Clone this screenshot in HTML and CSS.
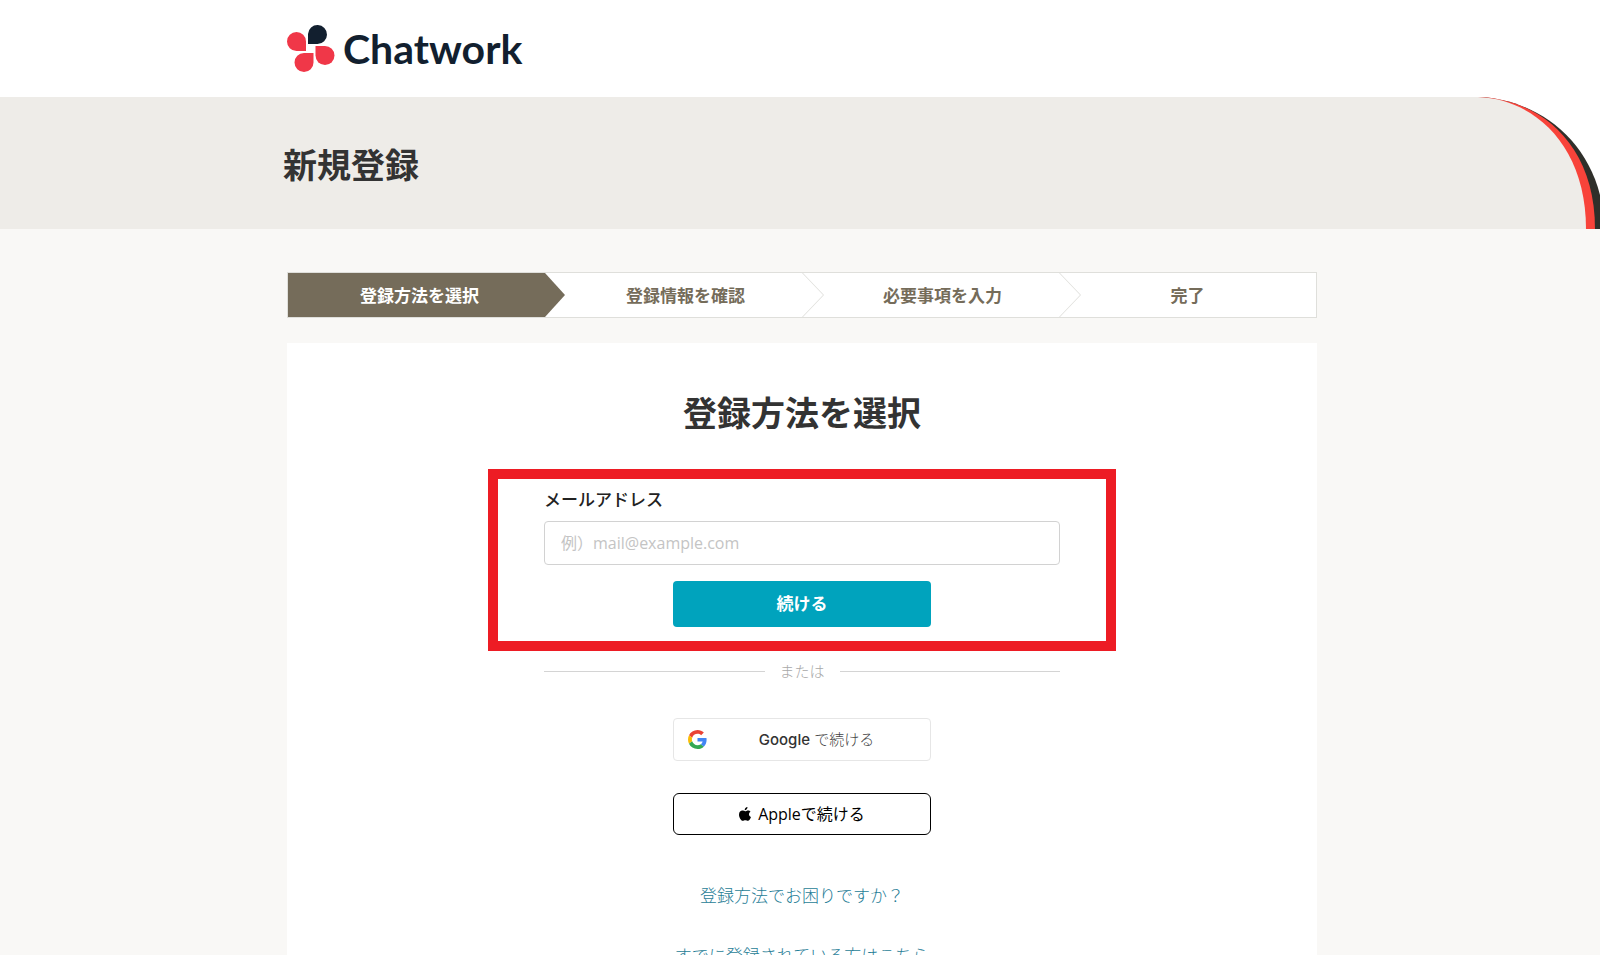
FILE: index.html
```
<!DOCTYPE html>
<html lang="ja">
<head>
    <meta charset="UTF-8">
    <meta name="viewport" content="width=device-width, initial-scale=1.0">
    <title>新規登録 | Chatwork</title>
    <link rel="stylesheet" href="styles.css">
</head>
<body>
    <header class="header">
        <div class="container">
            <a class="logo" href="#">
                <svg class="logo-mark" viewBox="0 0 48 48" aria-hidden="true">
                    <path fill="#f03748" d="M19 27H9.500A9.500 9.500 0 1 1 19 17.500Z"/>
                    <path fill="#121f2f" d="M21 20V10A9.500 9.500 0 1 1 30.500 20Z"/>
                    <path fill="#f03748" d="M28.500 22H38A9.500 9.500 0 1 1 28.500 31.500Z"/>
                    <path fill="#f03748" d="M26.500 29V38.500A9.500 9.500 0 1 1 17 29Z"/>
                </svg>
                <span class="logo-text">Chatwork</span>
            </a>
        </div>
    </header>
    <div class="hero">
        <div class="container">
            <h1>新規登録</h1>
        </div>
        <svg class="hero-curve" viewBox="0 0 128 132" preserveAspectRatio="none" aria-hidden="true">
            <rect width="128" height="132" fill="#fff"/>
            <path fill="#2f2f2a" d="M0 0H6C60 2 112 36 128 98V132H0Z"/>
            <path fill="#f8433a" d="M0 0H6C62 1 123 42 123 132H0Z"/>
            <path fill="#eeece8" d="M0 0H6C62 2 114 48 114 132H0Z"/>
        </svg>
    </div>
    <main class="container">
        <ol class="steps">
            <li class="step active">登録方法を選択</li>
            <li class="step">登録情報を確認</li>
            <li class="step">必要事項を入力</li>
            <li class="step">完了</li>
        </ol>
        <section class="card">
            <h2>登録方法を選択</h2>
            <form class="mail-form">
                <label for="email">メールアドレス</label>
                <input type="email" id="email" placeholder="例）mail@example.com">
                <button type="submit" class="button submit-button">続ける</button>
            </form>
            <div class="divider">または</div>
            <button type="button" class="button google-button">
                <svg class="google-icon" viewBox="0 0 48 48" aria-hidden="true">
                    <path fill="#ea4335" d="M24 9.500c3.540 0 6.710 1.220 9.210 3.600l6.850-6.850C35.900 2.380 30.470 0 24 0 14.620 0 6.510 5.380 2.560 13.220l7.980 6.190C12.430 13.720 17.740 9.500 24 9.500z"/>
                    <path fill="#4285f4" d="M46.980 24.550c0-1.570-.15-3.090-.38-4.550H24v9.020h12.940c-.58 2.960-2.260 5.480-4.780 7.180l7.730 6c4.510-4.180 7.090-10.360 7.090-17.650z"/>
                    <path fill="#fbbc05" d="M10.530 28.590c-.48-1.450-.76-2.990-.76-4.590s.27-3.140.76-4.590l-7.980-6.190C.92 16.460 0 20.120 0 24s.92 7.540 2.560 10.780l7.970-6.190z"/>
                    <path fill="#34a853" d="M24 48c6.480 0 11.930-2.130 15.890-5.810l-7.730-6c-2.150 1.450-4.920 2.300-8.160 2.300-6.260 0-11.570-4.220-13.470-9.910l-7.980 6.190C6.510 42.620 14.620 48 24 48z"/>
                </svg>
                <span class="google-label"><b>Google</b> で続ける</span>
            </button>
            <button type="button" class="button apple-button">
                <svg class="apple-icon" viewBox="0 0 24 28" aria-hidden="true">
                    <path d="M17 0c.2 3.500-2.700 6.600-5.600 6.500C11 3.400 13.900.3 17 0zM23 9.500c-4.400 2.700-3.700 8.600.9 10.500-.9 2.700-3.300 7.600-6.200 7.600-2 0-2.700-1.200-5.100-1.200s-3.200 1.200-5.100 1.200C4 27.600 0 21 0 15.500 0 10 3.400 7.200 6.800 7.200c2.300 0 4 1.400 5.500 1.400 1.400 0 3.400-1.500 6.200-1.500 1.800 0 3.500.9 4.500 2.400z"/>
                </svg>
                <span>Appleで続ける</span>
            </button>
            <a class="link" href="#">登録方法でお困りですか？</a>
            <a class="link" href="#">すでに登録されている方はこちら</a>
        </section>
    </main>
</body>
</html>
```
FILE: styles.css
```
* {
    box-sizing: border-box;
}

body {
    margin: 0;
    font-family: "Open Sans", "Noto Sans CJK JP", sans-serif;
    font-size: 17px;
    line-height: 24px;
    color: #333;
    background-color: #f9f8f6;
    overflow-x: hidden;
}

.container {
    width: 100%;
    max-width: 1034px;
    margin: 0 auto;
    padding-left: 4px;
}

.header {
    background-color: #fff;
    padding: 24px 0 25px;
}

.logo {
    display: inline-flex;
    align-items: center;
    gap: 8px;
    height: 48px;
    color: #121f2f;
    text-decoration: none;
    vertical-align: top;
}

.logo-mark {
    width: 48px;
    height: 48px;
}

.logo-text {
    padding-top: 2px;
    font-family: Lato, sans-serif;
    font-size: 41px;
    font-weight: 700;
    line-height: 48px;
}

.hero {
    position: relative;
    display: flex;
    align-items: center;
    height: 132px;
    background-color: #eeece8;
}

.hero .container {
    padding: 4px 0 0;
}

.hero h1 {
    margin: 0;
    font-size: 34px;
    line-height: 48px;
}

.hero-curve {
    position: absolute;
    top: 0;
    right: 0;
    width: 128px;
    height: 132px;
}

.steps {
    display: grid;
    grid-template-columns: repeat(4, 1fr);
    margin: 43px 0 25px;
    padding: 0;
    list-style: none;
    background-color: #fff;
    border: 1px solid #dfdfdb;
}

.step {
    position: relative;
    padding: 11px 0 9px 24px;
    color: #756c5a;
    font-weight: bold;
    text-align: center;
}

.step::after {
    content: "";
    position: absolute;
    top: 0;
    left: 100%;
    width: 22px;
    height: 100%;
    z-index: 1;
    background-color: #dfdfdb;
    clip-path: polygon(0 0, 1px 0, 100% 50%, 1px 100%, 0 100%, 21px 50%);
}

.step.active {
    padding-left: 6px;
    color: #fff;
    background-color: #756c5a;
}

.step.active::after {
    width: 20px;
    background-color: #756c5a;
    clip-path: polygon(0 0, 100% 50%, 0 100%);
}

.step:last-child {
    padding-left: 0;
}

.step:last-child::after {
    display: none;
}

.card {
    display: flex;
    flex-direction: column;
    align-items: center;
    padding: 46px 20px 60px;
    background-color: #fff;
}

.card h2 {
    margin: 0 0 32px;
    font-size: 34px;
    line-height: 48px;
}

.mail-form {
    display: flex;
    flex-direction: column;
    width: 100%;
    max-width: 628px;
    padding: 9px 46px 14px;
    border: 10px solid #ed1c24;
}

.mail-form label {
    margin-bottom: 9px;
    font-weight: 500;
    color: #222;
}

.mail-form input {
    height: 44px;
    margin-bottom: 16px;
    padding: 0 16px;
    border: 1px solid #d2d2d2;
    border-radius: 4px;
    font-family: inherit;
    font-size: 16px;
    color: #333;
}

.mail-form input::placeholder {
    color: #c4c4c4;
}

.button {
    width: 258px;
    font-family: inherit;
    font-size: 17px;
    line-height: 24px;
    cursor: pointer;
}

.submit-button {
    align-self: center;
    height: 46px;
    border: none;
    border-radius: 4px;
    background-color: #00a3bd;
    color: #fff;
    font-weight: bold;
}

.divider {
    display: flex;
    align-items: center;
    gap: 15px;
    width: 100%;
    max-width: 516px;
    margin: 8px 0 35px;
    font-size: 15px;
    font-weight: 300;
    color: #a8a8a8;
}

.divider::before,
.divider::after {
    content: "";
    flex: 1;
    height: 1px;
    background-color: #d4d4d4;
}

.google-button {
    display: flex;
    align-items: center;
    height: 43px;
    margin-bottom: 32px;
    padding: 0 14px;
    border: 1px solid #e6e6e6;
    border-radius: 4px;
    background-color: #fff;
    color: #444;
}

.google-icon {
    width: 19px;
    height: 19px;
}

.google-label {
    flex: 1;
    padding-left: 10px;
    font-family: Inter, "Noto Sans CJK JP", sans-serif;
    font-size: 15px;
    font-weight: 300;
}

.google-label b {
    font-weight: 500;
    color: #333;
}

.apple-button {
    display: flex;
    align-items: center;
    justify-content: center;
    gap: 7px;
    height: 42px;
    margin-bottom: 49px;
    border: 1px solid #000;
    border-radius: 6px;
    background-color: #fff;
    color: #000;
    font-size: 16px;
}

.apple-icon {
    width: 12px;
    height: 14px;
}

.link {
    margin-bottom: 36px;
    color: #1f7d96;
    font-weight: 300;
    text-decoration: none;
}

.link:hover {
    text-decoration: underline;
}
```
